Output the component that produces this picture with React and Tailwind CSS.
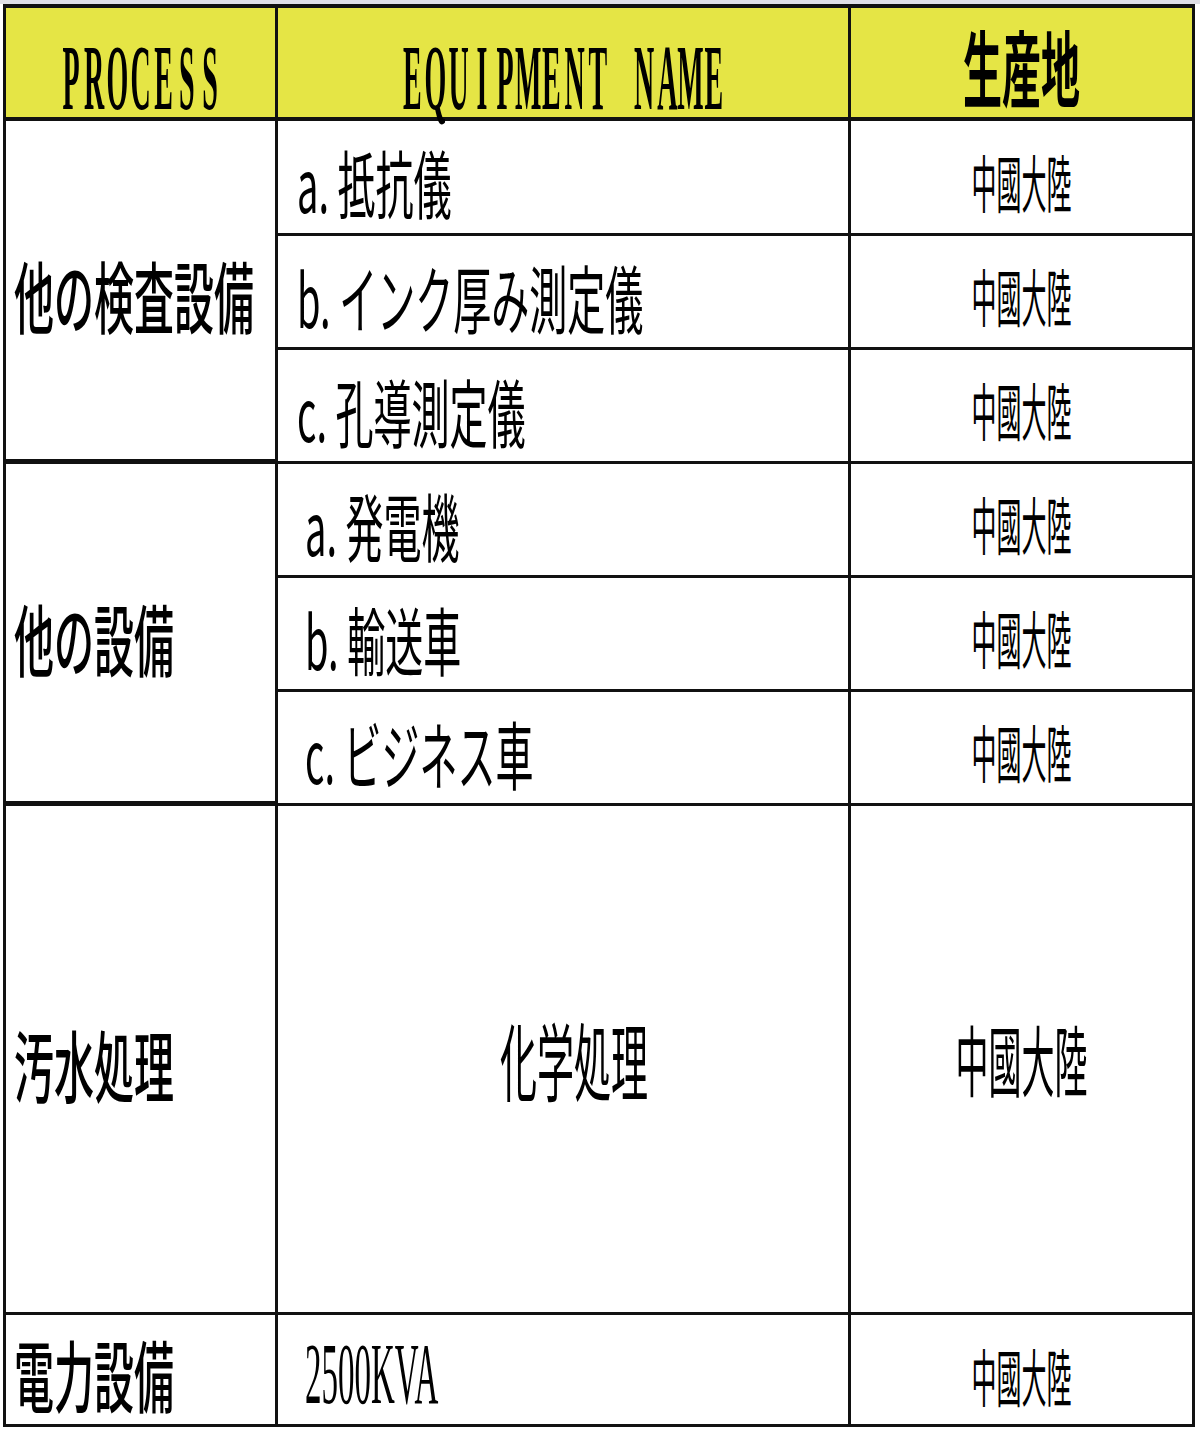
import React from "react";

const CJK = "font-['Noto_Sans_CJK_JP','Noto_Sans_CJK_TC',sans-serif]";

function Cell({ className = "", children }) {
  return (
    <div className={`border-r-[3px] border-b-[3px] border-[#111] flex ${className}`}>
      {children}
    </div>
  );
}

function MonoSerif({ text }) {
  return (
    <span className="inline-flex scale-y-[3.3] font-['Liberation_Serif',serif] font-bold text-[28px] leading-none text-black">
      {text.split("").map((ch, i) => (
        <span key={i} className="inline-flex justify-center w-[23.2px] whitespace-pre">
          {ch}
        </span>
      ))}
    </span>
  );
}

function Left({ text, className = "" }) {
  return (
    <Cell className={`items-center pl-[8px] pt-[10px] ${className}`}>
      <span className={`${CJK} inline-block whitespace-nowrap font-medium text-[40px] leading-none scale-y-[1.95] text-black`}>
        {text}
      </span>
    </Cell>
  );
}

function Equip({ text, pl = "pl-[19px]" }) {
  return (
    <Cell className={`items-center pt-[10px] ${pl}`}>
      <span className={`${CJK} inline-block whitespace-pre text-[38px] leading-none scale-y-[1.95] text-black`}>
        {text}
      </span>
    </Cell>
  );
}

function Origin({ big = false }) {
  return (
    <div className={`border-b-[3px] border-[#111] flex items-center justify-center ${big ? "pt-0" : "pt-[8px]"}`}>
      <span
        className={`${CJK} inline-block whitespace-nowrap leading-none text-black ${
          big ? "text-[33px] scale-y-[2.35]" : "text-[25px] scale-y-[2.5]"
        }`}
      >
        中國大陸
      </span>
    </div>
  );
}

export default function App() {
  return (
    <div className="w-[1200px] h-[1440px] bg-white relative">
      <div className="h-[4px] w-full bg-[#dfdfe6]" />
      <div className="ml-[3px] w-[1192px] border-[3px] border-t-[4px] border-[#111] grid grid-cols-[272px_573px_1fr] grid-rows-[113px_115px_114px_114px_114px_114px_114px_509px_109px]">
        {/* header */}
        <div className="border-r-[3px] border-b-[4px] border-[#111] bg-[#e5e545] flex items-start justify-center pt-[57px]">
          <MonoSerif text="PROCESS" />
        </div>
        <div className="border-r-[3px] border-b-[4px] border-[#111] bg-[#e5e545] flex items-start justify-center pt-[57px]">
          <MonoSerif text="EQUIPMENT NAME" />
        </div>
        <div className="border-b-[4px] border-[#111] bg-[#e5e545] flex items-end justify-center pb-[10px]">
          <span className={`${CJK} font-bold text-[39px] leading-none inline-block scale-y-[2.12] origin-bottom text-black whitespace-nowrap`}>
            生産地
          </span>
        </div>

        {/* group 1 */}
        <Left text="他の検査設備" className="row-span-3 border-b-[5px]" />
        <Equip text="a. 抵抗儀" />
        <Origin />
        <Equip text="b. インク厚み測定儀" />
        <Origin />
        <Equip text="c. 孔導測定儀" />
        <Origin />

        {/* group 2 */}
        <Left text="他の設備" className="row-span-3 border-b-[5px]" />
        <Equip text="a. 発電機" pl="pl-[27px]" />
        <Origin />
        <Equip text="b. 輸送車" pl="pl-[27px]" />
        <Origin />
        <Equip text="c. ビジネス車" pl="pl-[27px]" />
        <Origin />

        {/* 汚水処理 */}
        <Left text="汚水処理" />
        <Cell className="items-center justify-center pl-[22px]">
          <span className={`${CJK} inline-block whitespace-nowrap text-[37px] leading-none scale-y-[2.3] text-black`}>
            化学処理
          </span>
        </Cell>
        <Origin big />

        {/* 電力設備 */}
        <div className="border-r-[3px] border-[#111] flex items-center pl-[8px] pt-[8px]">
          <span className={`${CJK} inline-block whitespace-nowrap font-medium text-[40px] leading-none scale-y-[1.95] text-black`}>
            電力設備
          </span>
        </div>
        <div className="border-r-[3px] border-[#111] flex items-center pl-[27px] pt-[12px]">
          <span className="font-['Liberation_Serif',serif] inline-block whitespace-nowrap text-[33px] leading-none scale-y-[2.65] text-black">
            2500KVA
          </span>
        </div>
        <div className="flex items-center justify-center pt-[12px]">
          <span className={`${CJK} inline-block whitespace-nowrap text-[25px] leading-none scale-y-[2.5] text-black`}>
            中國大陸
          </span>
        </div>
      </div>
    </div>
  );
}
